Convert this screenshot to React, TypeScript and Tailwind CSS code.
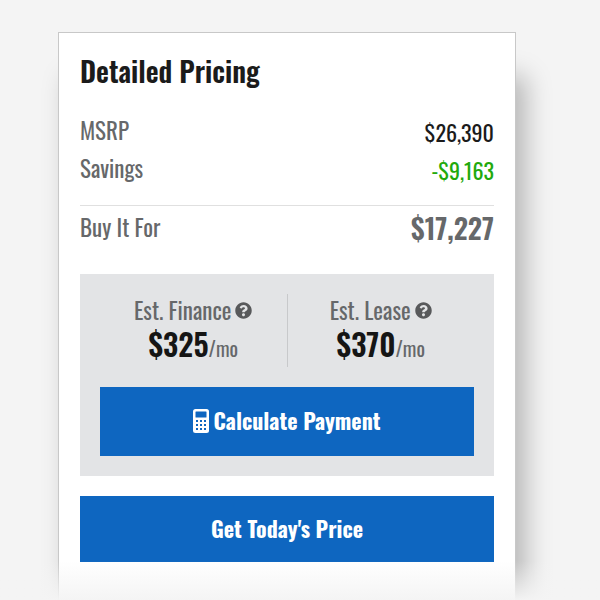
import React from "react";
import { FaQuestionCircle } from "react-icons/fa";

function CalculatorIcon() {
  const keys = [11, 15, 19];
  return (
    <svg viewBox="0 0 16 24" className="h-6 w-4 shrink-0" aria-hidden="true">
      <rect width="16" height="24" rx="2.5" fill="#ffffff" />
      <rect x="2.5" y="2.5" width="11" height="6" rx="0.5" fill="#0e66c0" />
      {keys.map((y) =>
        [3, 7, 11].map((x) => (
          <rect key={`${x}-${y}`} x={x} y={y} width="2" height="2" fill="#0e66c0" />
        ))
      )}
    </svg>
  );
}

function Estimate({ label, amount }: { label: string; amount: string }) {
  return (
    <div className="flex flex-1 flex-col items-center">
      <div className="flex h-8 items-center gap-1 text-[23px] leading-8 text-[#66686a]">
        <span>{label}</span>
        <button type="button" aria-label={`About ${label}`} className="text-[#58595b]">
          <FaQuestionCircle className="size-[17px]" />
        </button>
      </div>
      <div className="flex h-9 items-baseline leading-9 text-[#66686a]">
        <strong className="text-[30px] font-semibold text-[#151515]">{amount}</strong>
        <span className="text-[20px]">/mo</span>
      </div>
    </div>
  );
}

export default function App() {
  return (
    <main className="relative min-h-screen overflow-hidden bg-[#f4f4f4] pt-8 pr-[84px] pl-[58px] font-[Oswald,'Liberation_Sans_Narrow','Roboto_Condensed','Open_Sans_Condensed','DejaVu_Sans_Condensed',sans-serif]">
      <section className="border border-[#c8c8c8] bg-white px-[21px] pt-5 pb-[38px] shadow-[10px_44px_24px_rgba(0,0,0,0.25)]">
        <h1 className="text-[28px] leading-9 font-semibold text-[#1b1b1b]">Detailed Pricing</h1>
        <dl className="mt-[22px] text-[23px] text-[#66686a]">
          <div className="flex h-[38px] items-center justify-between">
            <dt>MSRP</dt>
            <dd className="pt-1 text-[22px] text-[#1b1b1b]">$26,390</dd>
          </div>
          <div className="flex h-[38px] items-center justify-between">
            <dt>Savings</dt>
            <dd className="pt-1 text-[22px] text-[#22a90c]">-$9,163</dd>
          </div>
          <div className="mt-[18px] flex h-11 items-center justify-between border-t border-[#e0e0e0]">
            <dt>Buy It For</dt>
            <dd className="text-[28px] font-semibold">$17,227</dd>
          </div>
        </dl>
        <div className="mt-[25px] bg-[#e3e4e6] p-5">
          <div className="flex h-[73px] divide-x divide-[#c8c9cb]">
            <Estimate label="Est. Finance" amount="$325" />
            <Estimate label="Est. Lease" amount="$370" />
          </div>
          <button type="button" className="mt-5 flex h-[69px] w-full items-center justify-center gap-1 bg-[#0e66c0] pb-0.5 text-[22px] font-bold text-white">
            <CalculatorIcon />
            Calculate Payment
          </button>
        </div>
        <button type="button" className="mt-5 h-[66px] w-full bg-[#0e66c0] pb-0.5 text-[22px] font-bold text-white">
          Get Today's Price
        </button>
      </section>
      <div className="pointer-events-none absolute inset-x-0 bottom-0 h-10 bg-linear-to-b from-transparent to-[#f4f4f4]" />
    </main>
  );
}
